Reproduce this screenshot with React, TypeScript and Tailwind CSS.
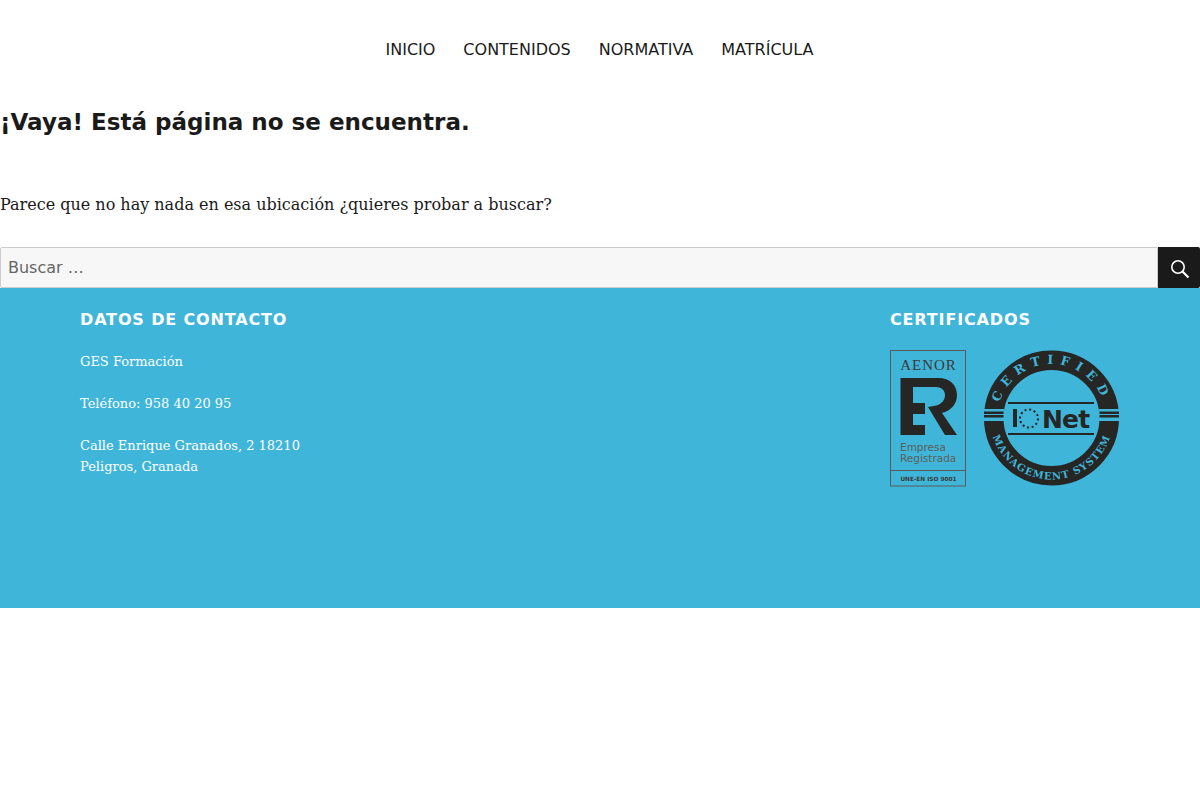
const SANS = "font-['DejaVu_Sans',sans-serif]";

const NAV_ITEMS = ['INICIO', 'CONTENIDOS', 'NORMATIVA', 'MATRÍCULA'];

function AenorLogo() {
  return (
    <svg width="76" height="137" viewBox="0 0 76 137" className="block">
      <rect x="0.5" y="0.5" width="75" height="135.5" fill="none" stroke="#5a5a58" strokeWidth="1" />
      <line x1="0" y1="120.5" x2="76" y2="120.5" stroke="#5a5a58" strokeWidth="1" />
      <text x="38.5" y="20" textAnchor="middle" fontFamily="Liberation Serif, serif" fontSize="15" letterSpacing="1" fill="#3a3a38">AENOR</text>
      <path d="M10.5 28H48C60 28 67 35 67 45C67 55 60 61 52 63L67 85H55L38 57C42 56 46 56 48 55C52 53 55 50 55 45C55 40 51 37 46 37H23V53H35V64H23V75H35V85H10.5Z" fill="#262624" />
      <text x="10" y="101" fontFamily="DejaVu Sans, sans-serif" fontSize="10.5" fill="#5e5e58">Empresa</text>
      <text x="10" y="112" fontFamily="DejaVu Sans, sans-serif" fontSize="10.5" fill="#5e5e58">Registrada</text>
      <text x="38.5" y="131" textAnchor="middle" fontFamily="DejaVu Sans, sans-serif" fontWeight="bold" fontSize="5.8" fill="#3a3a38">UNE-EN ISO 9001</text>
    </svg>
  );
}

function IqNetLogo() {
  return (
    <svg width="136" height="136" viewBox="0 0 136 136" className="block">
      <defs>
        <path id="arcTop" d="M13.5 68A54 54 0 0 1 121.5 68" />
        <path id="arcBottom" d="M6 68A61.5 61.5 0 0 0 129 68" />
      </defs>
      <circle cx="67.5" cy="68" r="57.75" fill="none" stroke="#262624" strokeWidth="19.5" />
      <rect x="0" y="59" width="20" height="12" fill="#3fb5d9" />
      <rect x="115" y="59" width="21" height="12" fill="#3fb5d9" />
      <rect x="0" y="61.5" width="19.5" height="2.5" fill="#262624" />
      <rect x="115.5" y="61.5" width="19.5" height="2.5" fill="#262624" />
      <rect x="0" y="65" width="19.5" height="2.5" fill="#262624" />
      <rect x="115.5" y="65" width="19.5" height="2.5" fill="#262624" />
      <text fontFamily="DejaVu Serif, serif" fontWeight="bold" fontSize="12.5" fill="#3fb5d9">
        <textPath href="#arcTop" startOffset="50%" textAnchor="middle" letterSpacing="6.5">CERTIFIED</textPath>
      </text>
      <text fontFamily="DejaVu Serif, serif" fontWeight="bold" fontSize="10" fill="#3fb5d9">
        <textPath href="#arcBottom" startOffset="50%" textAnchor="middle" letterSpacing="1">MANAGEMENT SYSTEM</textPath>
      </text>
      <rect x="24" y="52" width="86" height="2" fill="#262624" />
      <rect x="24" y="83" width="86" height="2" fill="#262624" />
      <rect x="29" y="59" width="4" height="18" fill="#262624" />
      <circle cx="45" cy="68.5" r="9" fill="none" stroke="#262624" strokeWidth="2" strokeDasharray="2 2.7" />
      <text x="58" y="77.5" fontFamily="DejaVu Sans, sans-serif" fontWeight="bold" fontSize="25" letterSpacing="-0.8" fill="#262624">Net</text>
    </svg>
  );
}

export default function App() {
  return (
    <div className="min-h-[800px] bg-white">
      {/* Top menu */}
      <nav className={`${SANS} flex h-[100px] items-center justify-center pr-[1px] text-[16px] text-[#1a1a1a]`}>
        <ul className="flex gap-[28px]">
          {NAV_ITEMS.map((item) => (
            <li key={item}>{item}</li>
          ))}
        </ul>
      </nav>

      <main>
        <h1 className={`${SANS} text-[23.04px] leading-[44px] font-bold text-[#1a1a1a]`}>
          ¡Vaya! Está página no se encuentra.
        </h1>
        <p className="mt-[48px] font-['DejaVu_Serif',serif] text-[16px] leading-[26px] text-[#1a1a1a]">
          Parece que no hay nada en esa ubicación ¿quieres probar a buscar?
        </p>

        {/* Search form */}
        <form className={`${SANS} mt-[29px] flex h-[41px]`}>
          <input
            type="search"
            placeholder="Buscar …"
            className="h-full min-w-0 flex-1 rounded-tl-[2px] rounded-bl-[2px] border border-[#cccccc] bg-[#f7f7f7] px-[7px] text-[16px] text-[#666666] placeholder:text-[#666666] focus:outline-none"
          />
          <button type="button" className="flex h-full w-[42px] items-center justify-center rounded-tr-[2px] rounded-br-[2px] bg-[#1a1a1a]">
            <svg width="20" height="20" viewBox="0 0 20 20" fill="none" stroke="#ffffff" strokeWidth="1.6" className="translate-x-[1px] translate-y-[1px]">
              <circle cx="8" cy="8" r="6.2" />
              <path d="M12.5 12.5L18.5 18.5" strokeWidth="2.2" />
            </svg>
          </button>
        </form>
      </main>

      {/* Footer */}
      <footer className="flex h-[320px] justify-between bg-[#3fb5d9] pt-[21px] pr-[80px] pl-[80px] text-white">
        <section>
          <h2 className={`${SANS} text-[16px] leading-[21px] font-bold tracking-[0.85px]`}>DATOS DE CONTACTO</h2>
          <div className="mt-[21px] font-['DejaVu_Serif',serif] text-[13px] leading-[21px]">
            <p>GES Formación</p>
            <p className="mt-[21px]">Teléfono: 958 40 20 95</p>
            <p className="mt-[21px]">
              Calle Enrique Granados, 2 18210
              <br />
              Peligros, Granada
            </p>
          </div>
        </section>
        <section className="w-[230px]">
          <h2 className={`${SANS} text-[16px] leading-[21px] font-bold tracking-[0.85px]`}>CERTIFICADOS</h2>
          <div className="mt-[20px] flex items-start gap-[18px]">
            <AenorLogo />
            <IqNetLogo />
          </div>
        </section>
      </footer>
    </div>
  );
}
